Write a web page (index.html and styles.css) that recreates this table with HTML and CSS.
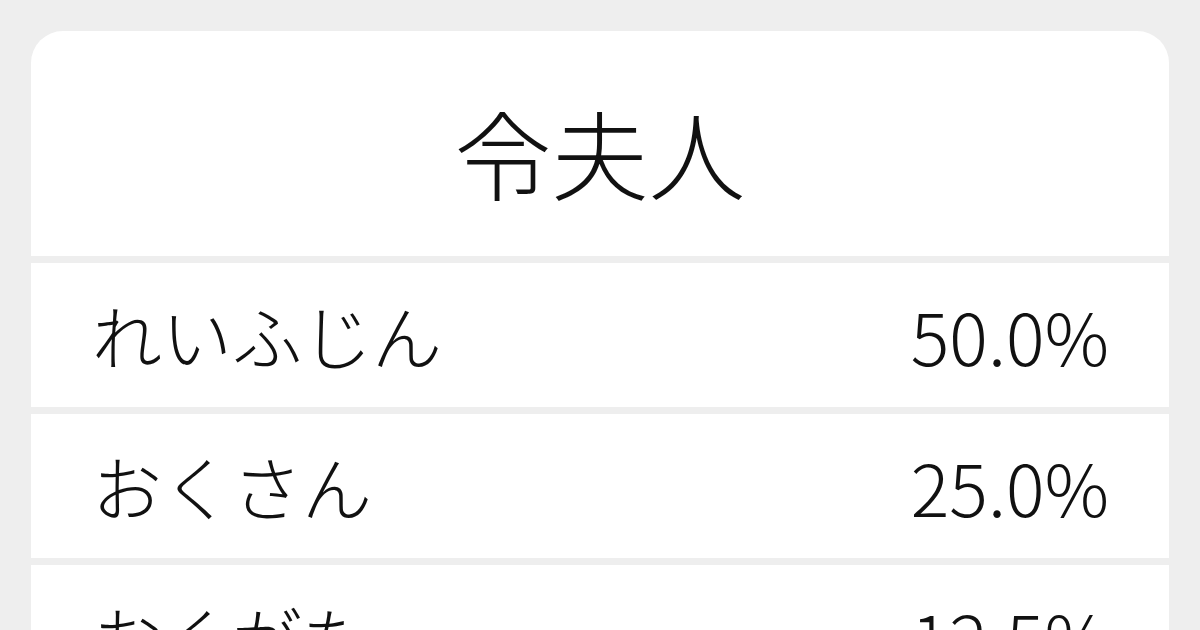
FILE: index.html
```html
<!DOCTYPE html>
<html lang="ja">
<head>
<meta charset="utf-8">
<title>令夫人</title>
<link rel="stylesheet" href="styles.css">
</head>
<body>
<main class="card">
  <header class="title">令夫人</header>
  <div class="row"><span class="reading">れいふじん</span><span class="pct">50.0%</span></div>
  <div class="row"><span class="reading">おくさん</span><span class="pct">25.0%</span></div>
  <div class="row"><span class="reading">おくがた</span><span class="pct">12.5%</span></div>
</main>
</body>
</html>
```
FILE: styles.css
```css
html, body {
  margin: 0;
  padding: 0;
  background: #eeeeee;
  height: 630px;
  overflow: hidden;
}
body {
  font-family: "Noto Sans CJK JP", "Noto Sans", sans-serif;
  font-weight: 300;
  color: #111111;
}
.card {
  margin: 31px;
  display: flex;
  flex-direction: column;
  gap: 7px;
  border-radius: 32px 32px 0 0;
  overflow: hidden;
}
.title {
  background: #ffffff;
  height: 225px;
  display: flex;
  align-items: center;
  justify-content: center;
  font-size: 97px;
  padding-top: 14px;
  box-sizing: border-box;
  line-height: 1;
}
.row {
  background: #ffffff;
  height: 144px;
  display: flex;
  align-items: center;
  justify-content: space-between;
  padding: 0 60px;
  line-height: 1;
}
.reading {
  font-size: 70px;
  padding-left: 1px;
}
.pct {
  font-size: 72px;
}
```
